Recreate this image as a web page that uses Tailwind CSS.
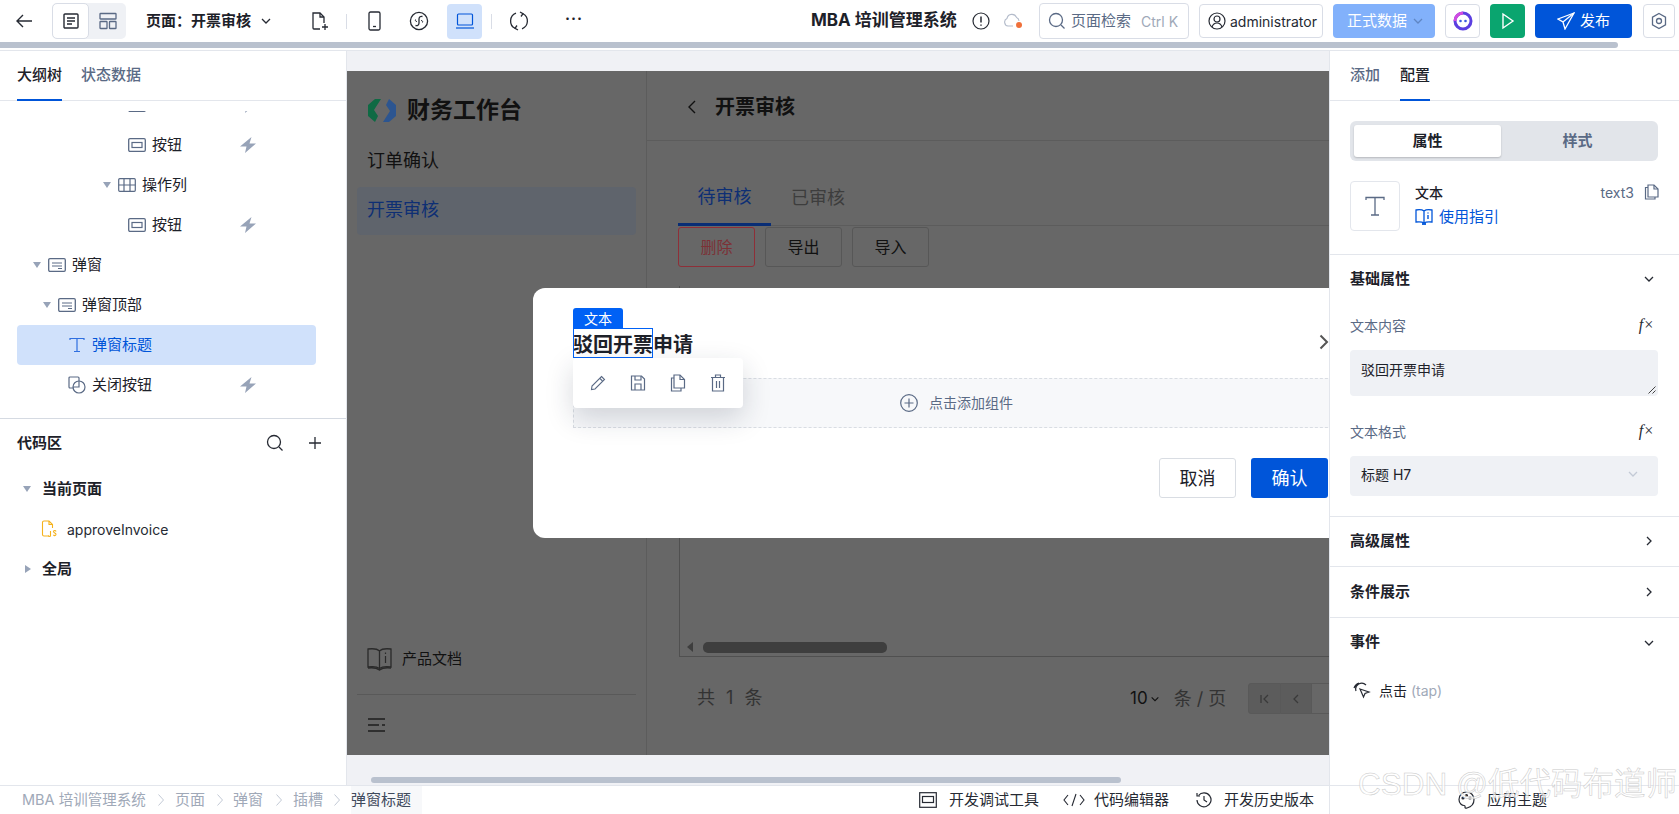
<!DOCTYPE html>
<html lang="zh">
<head>
<meta charset="utf-8">
<title>MBA培训管理系统</title>
<script src="https://cdn.jsdelivr.net/npm/@tailwindcss/browser@4"></script>
</head>
<body class="w-[1679px] h-[814px] overflow-hidden bg-white text-[#1d2129] font-['Inter','Noto_Sans_CJK_SC',sans-serif]">
<svg class="hidden">
  <defs>
    <symbol id="btn" viewBox="0 0 18 14"><rect x="0.7" y="0.7" width="16.6" height="12.6" rx="1.2" fill="none" stroke="#5a6a85" stroke-width="1.3"/><rect x="4" y="4.5" width="10" height="5" fill="none" stroke="#5a6a85" stroke-width="1.2"/></symbol>
    <symbol id="bolt" viewBox="0 0 16 16"><path d="M11.5 0 L0 9.5 H6.5 L5 16 L16 6.5 H9.5 Z" fill="#97a3b8"/></symbol>
    <symbol id="dlg" viewBox="0 0 18 14"><rect x="0.7" y="0.7" width="16.6" height="12.6" rx="1.2" fill="none" stroke="#5a6a85" stroke-width="1.3"/><path d="M4 5h10M4 8h10M10 10.5h4" stroke="#5a6a85" stroke-width="1.1" fill="none"/></symbol>
    <symbol id="chev" viewBox="0 0 12 12"><path d="M2 4l4 4 4-4" fill="none" stroke="currentColor" stroke-width="1.3"/></symbol>
    <symbol id="chevr" viewBox="0 0 12 12"><path d="M4 2l4 4-4 4" fill="none" stroke="currentColor" stroke-width="1.3"/></symbol>
    <symbol id="crumb" viewBox="0 0 8 14"><path d="M1.5 1.5l5 5.5-5 5.5" fill="none" stroke="#c3cad6" stroke-width="1"/></symbol>
  </defs>
</svg>

<header class="flex items-center h-[42px]">
  <svg class="ml-[15px] w-[18px] h-[18px]" viewBox="0 0 18 18" fill="none" stroke="#262a33" stroke-width="1.4"><path d="M17 9H2M8 3L2 9l6 6"/></svg>
  <div class="ml-[19px] flex w-[74px] h-[36px] rounded-[5px] bg-[#eff1f5]">
    <div class="w-[37px] h-full flex items-center justify-center bg-white border border-[#d9dde6] rounded-[5px]">
      <svg class="w-[18px] h-[18px]" viewBox="0 0 18 18" fill="none" stroke="#262a33" stroke-width="1.4"><rect x="2" y="2" width="14" height="14" rx="1"/><path d="M5 6h8M5 9h8M5 12h5"/></svg>
    </div>
    <div class="w-[37px] h-full flex items-center justify-center">
      <svg class="w-[18px] h-[18px]" viewBox="0 0 18 18" fill="none" stroke="#5a6a85" stroke-width="1.3"><rect x="1" y="1.5" width="16" height="5.5" rx="0.6"/><rect x="1" y="9.5" width="7" height="7" rx="0.6"/><rect x="10.5" y="9.5" width="6.5" height="7" rx="0.6"/></svg>
    </div>
  </div>
  <div class="ml-[20px] w-[104px] text-[15px] font-semibold whitespace-nowrap">页面：开票审核</div>
  <svg class="ml-[10px] w-[12px] h-[12px] text-[#262a33]"><use href="#chev"/></svg>
  <svg class="ml-[37px] w-[20px] h-[20px]" viewBox="0 0 20 20" fill="none" stroke="#262a33" stroke-width="1.3"><path d="M11 18H5a1 1 0 0 1-1-1V2h7l4 4v6"/><path d="M11 2v4h4"/><path d="M16 13v6M13 16h6"/></svg>
  <div class="ml-[17px] w-px h-[15px] bg-[#d9dde6]"></div>
  <svg class="ml-[17px] w-[20px] h-[20px]" viewBox="0 0 20 20" fill="none" stroke="#262a33" stroke-width="1.3"><rect x="5" y="1" width="11" height="18" rx="1.5"/><path d="M9 15.5h3"/></svg>
  <svg class="ml-[25px] w-[20px] h-[20px]" viewBox="0 0 20 20" fill="none" stroke="#262a33" stroke-width="1.3"><circle cx="10" cy="10" r="8.6"/><path d="M6.500 14.500c2 .5 3.500-.5 3.500-2.500V8c0-2 1.500-3 3.500-2.500" /><path d="M8 10.500c-1.500 0-2-1-1.500-2M12 9.500c1.500 0 2 1 1.500 2" stroke-width="1"/></svg>
  <div class="ml-[18px] w-[35px] h-[35px] rounded-[4px] bg-[#d0e1fb] flex items-center justify-center">
    <svg class="w-[20px] h-[20px]" viewBox="0 0 20 20" fill="none" stroke="#0055d9" stroke-width="1.2"><rect x="2.5" y="3" width="15" height="11" rx="1"/><path d="M1 17h18"/></svg>
  </div>
  <div class="ml-[9px] w-px h-[15px] bg-[#d9dde6]"></div>
  <svg class="ml-[17px] w-[20px] h-[20px]" viewBox="0 0 20 20" fill="none" stroke="#262a33" stroke-width="1.3"><path d="M7 2.200A8.300 8.300 0 0 0 6 17.300"/><path d="M13 17.800A8.300 8.300 0 0 0 14 2.700"/><path d="M11 1L14 2.700 12 5.500"/><path d="M9 19L6 17.300 8 14.500"/></svg>
  <div class="ml-[35px] w-[20px] text-center text-[15px] leading-none tracking-[1px] font-bold -mt-[6px]">···</div>
  <div class="ml-[227px] text-[17px] font-bold whitespace-nowrap w-[146px]">MBA 培训管理系统</div>
  <svg class="ml-[15px] w-[18px] h-[18px]" viewBox="0 0 18 18" fill="none" stroke="#262a33" stroke-width="1.2"><circle cx="9" cy="9" r="8"/><path d="M9 4.5v6M9 12.5v1.2" stroke-width="1.5"/></svg>
  <svg class="ml-[11px] w-[24px] h-[18px]" viewBox="0 0 24 18" fill="none"><path d="M12 14H7a4 4 0 0 1-1-7.6 5 5 0 0 1 9.5-1A4 4 0 0 1 18 9" stroke="#b4bccb" stroke-width="1.1"/><circle cx="18" cy="13" r="3" fill="#f0703a"/></svg>
  <div class="ml-[14px] w-[150px] h-[36px] border border-[#d9dde6] rounded-[4px] flex items-center pl-[8px] text-[15px] whitespace-nowrap">
    <svg class="w-[18px] h-[18px] mr-[5px] shrink-0" viewBox="0 0 18 18" fill="none" stroke="#5a6a85" stroke-width="1.3"><circle cx="8" cy="8" r="6.5"/><path d="M13 13l3.5 3.5"/></svg>
    <span class="text-[#5a6a85]">页面检索</span><span class="ml-[10px] text-[14px] text-[#a0a9b8]">Ctrl K</span>
  </div>
  <div class="ml-[10px] w-[124px] h-[34px] border border-[#d9dde6] rounded-[4px] flex items-center pl-[8px] text-[14px]">
    <svg class="w-[18px] h-[18px] mr-[4px] shrink-0" viewBox="0 0 18 18" fill="none" stroke="#262a33" stroke-width="1.2"><circle cx="9" cy="9" r="8"/><circle cx="9" cy="7" r="3"/><path d="M4 15c1-3 3-4 5-4s4 1 5 4"/></svg>
    <span class="text-[#262a33]">administrator</span>
  </div>
  <div class="ml-[10px] w-[102px] h-[34px] rounded-[4px] bg-[#82b1fb] flex items-center pl-[14px] text-[15px] text-white whitespace-nowrap">
    正式数据<svg class="ml-[5px] w-[12px] h-[12px] text-[#5f86c4]"><use href="#chev"/></svg>
  </div>
  <div class="ml-[10px] w-[35px] h-[34px] rounded-[4px] border border-[#d9dde6] flex items-center justify-center">
    <svg class="w-[22px] h-[22px]" viewBox="0 0 22 22" fill="none"><circle cx="11" cy="11" r="8" stroke="#5b3fe0" stroke-width="3"/><path d="M3 11a8 8 0 0 1 8-8" stroke="#d24be0" stroke-width="3"/><circle cx="8.5" cy="11" r="1.3" fill="#3b5be0"/><circle cx="13.5" cy="11" r="1.3" fill="#3b5be0"/></svg>
  </div>
  <div class="ml-[10px] w-[35px] h-[34px] rounded-[4px] bg-[#0aa56f] flex items-center justify-center">
    <svg class="w-[16px] h-[18px]" viewBox="0 0 16 18" fill="none" stroke="#fff" stroke-width="1.4"><path d="M3 2l10 7-10 7z"/></svg>
  </div>
  <div class="ml-[10px] w-[97px] h-[34px] rounded-[4px] bg-[#0055d9] flex items-center justify-center text-[15px] text-white">
    <svg class="w-[18px] h-[18px] mr-[5px]" viewBox="0 0 18 18" fill="none" stroke="#fff" stroke-width="1.3"><path d="M17 1L1 7l5 3 2 7z"/><path d="M17 1L6 10"/></svg>发布
  </div>
  <div class="ml-[11px] w-[32px] h-[34px] rounded-[4px] border border-[#d9dde6] flex items-center justify-center">
    <svg class="w-[18px] h-[18px]" viewBox="0 0 18 18" fill="none" stroke="#5a6a85" stroke-width="1.3"><path d="M9 1.5l6.5 3.7v7.6L9 16.5l-6.5-3.7V5.200z"/><circle cx="9" cy="9" r="2.500"/></svg>
  </div>
</header>
<div class="h-[8px]"><div class="w-[1618px] h-[6px] bg-[#b9c1ce] rounded-r-[3px]"></div></div>

<main class="flex h-[735px] border-t border-[#e3e6ec]">
  <!-- left panel -->
  <aside class="w-[347px] shrink-0 border-r border-[#e3e6ec] flex flex-col text-[14px]">
    <div class="flex h-[50px] px-[17px] gap-[19px] border-b border-[#e3e6ec] text-[15px]">
      <div class="h-[50px] w-[45px] flex items-center justify-center border-b-2 border-[#0055d9] font-medium text-[#1d2129] whitespace-nowrap">大纲树</div>
      <div class="h-[49px] flex items-center font-medium text-[#5a6a85] whitespace-nowrap">状态数据</div>
    </div>
    <div class="mt-[10px] h-[308px] overflow-hidden border-b border-[#d5dae2]">
      <div class="-mt-[26px]">
        <div class="h-10 flex items-center pl-[128px] relative"><svg class="w-[18px] h-[14px]"><use href="#btn"/></svg><span class="ml-[6px] w-[88px]"></span><svg class="w-[16px] h-[16px]"><use href="#bolt"/></svg></div>
        <div class="h-10 flex items-center pl-[128px]"><svg class="w-[18px] h-[14px]"><use href="#btn"/></svg><span class="ml-[6px] w-[88px] text-[15px]">按钮</span><svg class="w-[16px] h-[16px]"><use href="#bolt"/></svg></div>
        <div class="h-10 flex items-center pl-[103px]"><span class="w-0 h-0 border-x-[4px] border-x-transparent border-t-[6px] border-t-[#97a3b8] mr-[7px]"></span><svg class="w-[18px] h-[14px]" viewBox="0 0 18 14" fill="none" stroke="#5a6a85" stroke-width="1.200"><rect x="0.700" y="0.700" width="16.600" height="12.600" rx="1"/><path d="M0.700 7h16.600M6 0.700v12.600M12 0.700v12.600"/></svg><span class="ml-[6px] text-[15px]">操作列</span></div>
        <div class="h-10 flex items-center pl-[128px]"><svg class="w-[18px] h-[14px]"><use href="#btn"/></svg><span class="ml-[6px] w-[88px] text-[15px]">按钮</span><svg class="w-[16px] h-[16px]"><use href="#bolt"/></svg></div>
        <div class="h-10 flex items-center pl-[33px]"><span class="w-0 h-0 border-x-[4px] border-x-transparent border-t-[6px] border-t-[#97a3b8] mr-[7px]"></span><svg class="w-[18px] h-[14px]"><use href="#dlg"/></svg><span class="ml-[6px] text-[15px]">弹窗</span></div>
        <div class="h-10 flex items-center pl-[43px]"><span class="w-0 h-0 border-x-[4px] border-x-transparent border-t-[6px] border-t-[#97a3b8] mr-[7px]"></span><svg class="w-[18px] h-[14px]"><use href="#dlg"/></svg><span class="ml-[6px] text-[15px]">弹窗顶部</span></div>
        <div class="h-10 ml-[17px] w-[299px] rounded-[4px] bg-[#d0e1fb] flex items-center pl-[52px] text-[#0055d9]"><svg class="w-[16px] h-[16px]" viewBox="0 0 16 16" fill="none" stroke="#2f6fe0" stroke-width="1.200"><path d="M1 3V1.500h14V3M8 1.500V14.500M5 14.500h6"/></svg><span class="ml-[7px] text-[15px]">弹窗标题</span></div>
        <div class="h-10 flex items-center pl-[68px]"><svg class="w-[18px] h-[18px]" viewBox="0 0 18 18" fill="none" stroke="#5a6a85" stroke-width="1.200"><path d="M6 12H2a1 1 0 0 1-1-1V2a1 1 0 0 1 1-1h8a1 1 0 0 1 1 1v3"/><circle cx="11" cy="11" r="6"/><path d="M5 11h6V5"/></svg><span class="ml-[6px] w-[148px] text-[15px]">关闭按钮</span><svg class="w-[16px] h-[16px]"><use href="#bolt"/></svg></div>
      </div>
    </div>
    <div class="h-[48px] flex items-center pl-[17px] pr-[24px] text-[15px] font-semibold">
      <span>代码区</span>
      <svg class="ml-auto w-[18px] h-[18px]" viewBox="0 0 18 18" fill="none" stroke="#262a33" stroke-width="1.300"><circle cx="8" cy="8" r="6.500"/><path d="M13 13l3.500 3.500"/></svg>
      <svg class="ml-[24px] w-[14px] h-[14px]" viewBox="0 0 14 14" fill="none" stroke="#262a33" stroke-width="1.300"><path d="M7 1v12M1 7h12"/></svg>
    </div>
    <div class="mt-[2px] h-10 flex items-center pl-[23px] text-[15px] font-semibold"><span class="w-0 h-0 border-x-[4px] border-x-transparent border-t-[6px] border-t-[#97a3b8] mr-[11px]"></span>当前页面</div>
    <div class="h-10 flex items-center pl-[41px]"><svg class="w-[16px] h-[18px]" viewBox="0 0 16 18" fill="none" stroke="#f5b21c" stroke-width="1.100"><path d="M8 16H3a1.500 1.500 0 0 1-1.500-1.500v-12A1.500 1.500 0 0 1 3 1h5l3.500 3.500V8"/><path d="M8 1v3.500h3.500"/><path d="M9.500 11v4.500a1 1 0 0 1-2 0M15 11.500a1.300 1.300 0 0 0-2.500 0c0 1.800 2.500 1.200 2.500 3a1.300 1.300 0 0 1-2.500.3"/></svg><span class="ml-[10px] text-[14px] text-[#262a33]">approveInvoice</span></div>
    <div class="h-10 flex items-center pl-[25px] text-[15px] font-semibold"><span class="w-0 h-0 border-y-[4px] border-y-transparent border-l-[6px] border-l-[#97a3b8] mr-[11px]"></span>全局</div>
  </aside>

  <!-- canvas -->
  <section class="flex-1 min-w-0 bg-[#f0f1f5] pt-[20px] overflow-hidden">
    <div class="relative h-[684px] bg-[#676767] overflow-hidden flex text-[#111]">
      <div class="w-[300px] shrink-0 border-r border-[#5c5c5c] flex flex-col">
        <div class="h-[70px] pl-[21px] pt-[8px] flex items-center">
          <svg class="w-[28px] h-[23px]" viewBox="0 0 28 23"><path d="M7 0H13L6 11L10 17L7 23L0 17V6Z" fill="#0f6a44"/><path d="M21 23H15L22 12L18 6L21 0L28 6V17Z" fill="#2c5590"/></svg>
          <span class="ml-[11px] text-[23px] font-bold whitespace-nowrap text-[#111]">财务工作台</span>
        </div>
        <div class="mt-[-5px] h-[48px] pl-[20px] flex items-center text-[18px]">订单确认</div>
        <div class="mt-[3px] mx-[10px] h-[48px] pl-[10px] pb-[4px] rounded-[4px] bg-[#5f646c] flex items-center text-[18px] text-[#0e2f74]">开票审核</div>
        <div class="mt-auto h-[40px] pl-[20px] flex items-center text-[15px] mb-[15px]">
          <svg class="w-[25px] h-[24px] mr-[10px]" viewBox="0 0 25 24" fill="none" stroke="#2a2a2a" stroke-width="1.300"><path d="M12.500 4C10 1.500 5 1.500 1 2v18c4-.5 9-.5 11.500 1.500C15 19.500 20 19.500 24 20V2c-4-.5-9-.5-11.500 2zM12.500 4v17.500"/><path d="M18.500 9v7M18.500 5.500v1.500" stroke-width="1.200"/><path d="M1 21c4-.5 9 0 11.500 2C15 21 20 20.500 24 21" stroke-width="1.500"/></svg>
          产品文档
        </div>
        <div class="mx-[10px] border-t border-[#595959]"></div>
        <div class="h-[60px] pl-[21px] flex items-center">
          <svg class="w-[18px] h-[14px]" viewBox="0 0 18 14" fill="none" stroke="#1e1e1e" stroke-width="1.500"><path d="M0 1h17M0 7h11M14 7h3M0 13h17"/></svg>
        </div>
      </div>
      <div class="flex-1 min-w-0 flex flex-col">
        <div class="h-[70px] shrink-0 border-b border-[#5c5c5c] flex items-center pl-[40px] pt-[3px]">
          <svg class="w-[10px] h-[14px]" viewBox="0 0 10 14" fill="none" stroke="#111" stroke-width="1.400"><path d="M8 1L2 7l6 6"/></svg>
          <span class="ml-[18px] text-[20px] font-bold">开票审核</span>
        </div>
        <div class="ml-[31px] mt-[30px] h-[55px] shrink-0 border-b border-[#5c5c5c] flex text-[18px]">
          <div class="w-[93px] h-[55px] pb-[2px] border-b-[3px] border-[#082d75] flex items-center justify-center text-[#0e2f74]">待审核</div>
          <div class="ml-[20px] h-[55px] pb-[2px] flex items-center text-[#3d3d3d]">已审核</div>
        </div>
        <div class="ml-[31px] flex gap-[10px] text-[16px] mt-[1px]">
          <div class="w-[77px] h-[40px] rounded-[3px] border border-[#8e2f38] text-[#7c3136] flex items-center justify-center">删除</div>
          <div class="w-[77px] h-[40px] rounded-[3px] border border-[#575757] flex items-center justify-center">导出</div>
          <div class="w-[77px] h-[40px] rounded-[3px] border border-[#575757] flex items-center justify-center">导入</div>
        </div>
        <div class="ml-[32px] mt-[19px] h-[371px] shrink-0 border-l border-b border-[#505050] relative flex items-end pb-[3px] pl-[7px]">
          <span class="w-0 h-0 border-y-[5px] border-y-transparent border-r-[6px] border-r-[#3e3e3e] mb-[1px]"></span>
          <div class="ml-[10px] w-[184px] h-[11px] rounded-[5px] bg-[#3e3e3e]"></div>
        </div>
        <div class="h-[55px] mt-[14px] flex items-center ml-[50px] text-[#333] whitespace-nowrap">
          <span class="w-[68px] shrink-0 text-[18px] tracking-[3px] -mt-[2px]">共 1 条</span>
          <span class="ml-[365px] shrink-0 text-[17px] text-[#111]">10</span>
          <svg class="w-[10px] h-[10px] ml-[2px] shrink-0 text-[#111]"><use href="#chev"/></svg>
          <span class="ml-[14px] shrink-0 text-[18px]">条 / 页</span>
          <div class="ml-[22px] flex h-[31px] shrink-0">
            <div class="w-[33px] border border-[#595959] rounded-l-[3px] bg-[#5c5c5c] flex items-center justify-center"><svg class="w-[12px] h-[12px] text-[#3a3a3a]" viewBox="0 0 12 12" fill="none" stroke="currentColor" stroke-width="1.300"><path d="M2 2v8M9 2L5 6l4 4"/></svg></div>
            <div class="w-[31px] border-y border-r border-[#595959] bg-[#5c5c5c] flex items-center justify-center"><svg class="w-[12px] h-[12px] text-[#3a3a3a]" viewBox="0 0 12 12" fill="none" stroke="currentColor" stroke-width="1.300"><path d="M8 2L4 6l4 4"/></svg></div>
            <div class="w-[31px] border-y border-[#595959]"></div>
          </div>
        </div>
      </div>

      <!-- modal -->
      <div class="absolute left-[186px] top-[217px] w-[840px] h-[250px] bg-white rounded-[12px] pl-[40px] pt-[20px] text-[#1d2129]">
        <div class="w-[50px] h-[20px] rounded-t-[3px] bg-[#0061f5] text-white text-[14px] flex items-center justify-center">文本</div>
        <div class="relative h-[30px] text-[20px] font-bold leading-[34px] whitespace-nowrap">
          驳回开票申请
          <div class="absolute left-0 top-0 w-[80px] h-[30px] border border-[#0061f5]"></div>
        </div>
        <div class="mt-[20px] h-[50px] bg-[#f7f8fa] border-y border-l border-dashed border-[#d9dde3] flex items-center text-[14px] text-[#5a6a85]">
          <svg class="ml-[326px] w-[18px] h-[18px]" viewBox="0 0 18 18" fill="none" stroke="#5a6a85" stroke-width="1.200"><circle cx="9" cy="9" r="8.300"/><path d="M9 4.500v9M4.500 9h9"/></svg>
          <span class="ml-[11px] pb-[2px]">点击添加组件</span>
        </div>
        <div class="mt-[30px] flex justify-end pr-[45px] gap-[15px] text-[18px]">
          <div class="w-[77px] h-[40px] rounded-[3px] border border-[#d9dde3] flex items-center justify-center">取消</div>
          <div class="w-[77px] h-[40px] rounded-[3px] bg-[#0055d9] text-white flex items-center justify-center">确认</div>
        </div>
        <svg class="absolute left-[786px] top-[46px] w-[10px] h-[16px]" viewBox="0 0 10 16" fill="none" stroke="#555" stroke-width="2"><path d="M1.500 1.500L8 8l-6.500 6.500"/></svg>
        <div class="absolute left-[40px] top-[70px] w-[170px] h-[50px] bg-white rounded-[4px] shadow-[0_10px_28px_rgba(30,40,60,0.18)] flex items-center">
          <svg class="ml-[17px] w-[16px] h-[16px]" viewBox="0 0 16 16" fill="none" stroke="#5a6a85" stroke-width="1.100"><path d="M11.500 1.500l3 3L5 14l-3.500.5L2 11z"/><path d="M10 3.500l2.500 2.500"/></svg>
          <svg class="ml-[24px] w-[16px] h-[16px]" viewBox="0 0 16 16" fill="none" stroke="#5a6a85" stroke-width="1.200"><path d="M1.500 1h10l3 3v11h-13z"/><path d="M5 1v4h6V1M5 15V9h6v6"/></svg>
          <svg class="ml-[24px] w-[16px] h-[18px]" viewBox="0 0 16 18" fill="none" stroke="#5a6a85" stroke-width="1.200"><path d="M4 1h6l4.500 4.500V14H4z"/><path d="M10 1v4.500h4.500"/><path d="M4 4H1.500v13H11v-3"/></svg>
          <svg class="ml-[24px] w-[16px] h-[18px]" viewBox="0 0 16 18" fill="none" stroke="#5a6a85" stroke-width="1.200"><path d="M1 3.500h14M5.500 3.500V1h5v2.500M2.500 3.500V17h11V3.500M6.500 7v7M9.500 7v7"/></svg>
        </div>
      </div>
    </div>
    <div class="mt-[22px] ml-[24px] w-[750px] h-[6px] rounded-[3px] bg-[#b9c1ce]"></div>
  </section>

  <!-- right panel -->
  <aside class="w-[350px] shrink-0 border-l border-[#e3e6ec] flex flex-col text-[14px]">
    <div class="flex h-[50px] pl-[20px] gap-[20px] border-b border-[#e3e6ec] text-[15px] font-medium">
      <div class="h-[49px] flex items-center text-[#5a6a85]">添加</div>
      <div class="h-[50px] flex items-center border-b-2 border-[#0055d9] text-[#1d2129]">配置</div>
    </div>
    <div class="px-[20px] pt-[20px] pb-[23px] border-b border-[#e3e6ec]">
      <div class="h-[40px] w-[308px] rounded-[6px] bg-[#e2e5ea] p-[4px] flex text-[15px] font-semibold">
        <div class="w-[147px] rounded-[3px] bg-white shadow-[0_1px_2px_rgba(0,0,0,0.2)] flex items-center justify-center">属性</div>
        <div class="flex-1 flex items-center justify-center text-[#5a6a85]">样式</div>
      </div>
      <div class="mt-[20px] h-[50px] flex">
        <div class="w-[50px] h-[50px] rounded-[4px] border border-[#e3e6ec] flex items-center justify-center">
          <svg class="w-[20px] h-[20px]" viewBox="0 0 20 20" fill="none" stroke="#5a6a85" stroke-width="1.300"><path d="M1 4V1.500h18V4M10 1.500V19M6 19h8"/></svg>
        </div>
        <div class="ml-[15px] flex-1">
          <div class="mt-[1px] h-[20px] flex items-center text-[14px] font-medium">文本<span class="ml-auto mr-[10px] text-[#5a6a85] font-normal text-[14px]">text3</span><svg class="w-[15px] h-[16px]" viewBox="0 0 15 16" fill="none" stroke="#5a6a85" stroke-width="1.200"><path d="M4 1h6l4 4v8H4z"/><path d="M10 1v4h4"/><path d="M4 3.500H1.500V15H11v-2"/></svg></div>
          <div class="mt-[5px] h-[20px] flex items-center text-[15px] text-[#0055d9]">
            <svg class="w-[18px] h-[18px] mr-[6px]" viewBox="0 0 18 18" fill="none" stroke="#0055d9" stroke-width="1.300"><path d="M9 3C7 1.500 4 1.500 1 2v12c3-.4 6-.4 8 1 2-1.400 5-1.400 8-1V2c-3-.5-6-.5-8 1zM9 3v12"/><path d="M13 7v4M13 4.500v1" stroke-width="1.400"/><path d="M7 16h4" stroke-width="1.800"/></svg>
            使用指引
          </div>
        </div>
      </div>
    </div>
    <div class="px-[20px] pb-[20px] border-b border-[#e3e6ec]">
      <div class="h-[46px] pt-[2px] flex items-center text-[15px] font-semibold">基础属性<svg class="ml-auto mr-[4px] w-[12px] h-[12px] text-[#262a33]"><use href="#chev"/></svg></div>
      <div class="mt-[14px] h-[20px] flex items-center text-[14px] text-[#5a6a85]">文本内容<span class="ml-auto mr-[5px] font-['Liberation_Serif',serif] italic text-[16px] text-[#262a33]">f×</span></div>
      <div class="relative mt-[15px] h-[46px] w-[308px] rounded-[4px] bg-[#eff1f5] pl-[11px] flex items-center text-[14px] pb-[8px]">驳回开票申请
        <svg class="absolute right-[2px] bottom-[2px] w-[8px] h-[8px]" viewBox="0 0 8 8" stroke="#444" stroke-width="1"><path d="M7.500 0.500L0.500 7.500M7.500 4.500L4.500 7.500"/></svg>
      </div>
      <div class="mt-[25px] h-[20px] flex items-center text-[14px] text-[#5a6a85]">文本格式<span class="ml-auto mr-[5px] font-['Liberation_Serif',serif] italic text-[16px] text-[#262a33]">f×</span></div>
      <div class="mt-[15px] h-[40px] w-[308px] rounded-[4px] bg-[#eff1f5] pl-[11px] pb-[4px] flex items-center text-[14px]">标题 H7<svg class="ml-auto mr-[19px] w-[12px] h-[12px] text-[#c3cad6]"><use href="#chev"/></svg></div>
    </div>
    <div class="h-[50px] px-[20px] pb-[1px] border-b border-[#e3e6ec] flex items-center text-[15px] font-semibold">高级属性<svg class="ml-auto mr-[4px] w-[12px] h-[12px] text-[#262a33]"><use href="#chevr"/></svg></div>
    <div class="h-[51px] px-[20px] border-b border-[#e3e6ec] flex items-center text-[15px] font-semibold">条件展示<svg class="ml-auto mr-[4px] w-[12px] h-[12px] text-[#262a33]"><use href="#chevr"/></svg></div>
    <div class="h-[46px] px-[20px] pt-[3px] flex items-center text-[15px] font-semibold">事件<svg class="ml-auto mr-[4px] w-[12px] h-[12px] text-[#262a33]"><use href="#chev"/></svg></div>
    <div class="mt-[6px] h-[40px] px-[23px] flex items-center text-[14px]">
      <svg class="w-[18px] h-[18px] mr-[8px]" viewBox="0 0 18 18" fill="none" stroke="#262a33" stroke-width="1.200"><path d="M3 10a6 6 0 0 1 10-6M1 7a8 8 0 0 1 5-5"/><path d="M7 8l9 3-4 1.500L10.500 16z"/></svg>
      点击<span class="ml-[4px] text-[#a0a9b8]">(tap)</span>
    </div>
  </aside>
</main>

<footer class="relative h-[29px] border-t border-[#e3e6ec] flex items-center text-[15px] text-[#a0a9b8] whitespace-nowrap">
  <span class="ml-[22px] w-[125px] text-[14.500px]">MBA 培训管理系统</span>
  <svg class="ml-[10px] w-[8px] h-[14px]"><use href="#crumb"/></svg>
  <span class="ml-[10px] w-[31px]">页面</span>
  <svg class="ml-[10px] w-[8px] h-[14px]"><use href="#crumb"/></svg>
  <span class="ml-[9px] w-[32px]">弹窗</span>
  <svg class="ml-[10px] w-[8px] h-[14px]"><use href="#crumb"/></svg>
  <span class="ml-[10px] w-[30px]">插槽</span>
  <svg class="ml-[10px] w-[8px] h-[14px]"><use href="#crumb"/></svg>
  <span class="ml-[10px] w-[71px] h-full flex items-center bg-[#f7f8fa] text-[#3f4a5c]">弹窗标题</span>
  <svg class="ml-[497px] w-[18px] h-[16px]" viewBox="0 0 18 16" fill="none" stroke="#262a33" stroke-width="1.200"><rect x="0.700" y="0.700" width="16.600" height="14.600"/><rect x="3.500" y="4.500" width="11" height="6"/></svg>
  <span class="ml-[12px] w-[90px] text-[#262a33]">开发调试工具</span>
  <svg class="ml-[24px] w-[22px] h-[14px]" viewBox="0 0 22 14" fill="none" stroke="#262a33" stroke-width="1.100"><path d="M5 2L1 7l4 5M17 2l4 5-4 5M13 1L9 13"/></svg>
  <span class="ml-[9px] w-[75px] text-[#262a33]">代码编辑器</span>
  <svg class="ml-[27px] w-[16px] h-[16px]" viewBox="0 0 16 16" fill="none" stroke="#262a33" stroke-width="1.200"><path d="M2.500 3.500A7 7 0 1 1 1 8"/><path d="M1 1v3h3M8 4v4l3 2"/></svg>
  <span class="ml-[12px] w-[90px] text-[#262a33]">开发历史版本</span>
  <div class="ml-[15px] w-px h-full bg-[#e3e6ec]"></div>
  <svg class="ml-[128px] w-[17px] h-[18px]" viewBox="0 0 17 18" fill="none" stroke="#262a33" stroke-width="1.200"><path d="M8.500 1C4 1 1 4.500 1 8.500c0 4 3 6 5 6 1.500 0 1 1.500 1 2 0 .5 1 1 2 .5 4-1 7-4 7-8.500C16 4.500 13 1 8.500 1z"/><circle cx="5" cy="7" r="1" fill="#262a33"/><circle cx="8.500" cy="4.500" r="1" fill="#262a33"/><circle cx="12" cy="7" r="1" fill="#262a33"/></svg>
  <span class="ml-[12px] text-[#262a33]">应用主题</span>
  <div class="absolute left-[1358px] top-[-14px] text-[31.500px] leading-[24px] text-white/70 [-webkit-text-stroke:0.5px_#c8c8c8] font-['Liberation_Sans','Noto_Sans_CJK_SC',sans-serif] pointer-events-none">CSDN @低代码布道师</div>
</footer>
</body>
</html>
